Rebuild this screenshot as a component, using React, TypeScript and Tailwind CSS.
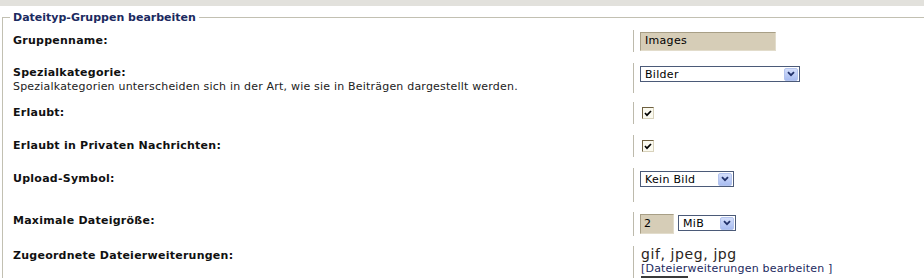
const ROWS = [
  { label: 'Gruppenname:', h: 'h-[22px]', mt: 'mt-0', pt: 'pt-[4px]', rt: 'pt-[2px]', kind: 'text' },
  { label: 'Spezialkategorie:', h: 'h-[30px]', mt: 'mt-[11px]', pt: 'pt-[3px]', rt: 'pt-[3px]', kind: 'cat' },
  { label: 'Erlaubt:', h: 'h-[22px]', mt: 'mt-[9px]', pt: 'pt-[4px]', rt: 'pt-[5px]', kind: 'check' },
  { label: 'Erlaubt in Privaten Nachrichten:', h: 'h-[22px]', mt: 'mt-[11px]', pt: 'pt-[4px]', rt: 'pt-[5px]', kind: 'check' },
  { label: 'Upload-Symbol:', h: 'h-[34px]', mt: 'mt-[11px]', pt: 'pt-[4px]', rt: 'pt-[3px]', kind: 'symbol' },
  { label: 'Maximale Dateigröße:', h: 'h-[24px]', mt: 'mt-[10px]', pt: 'pt-[2px]', rt: 'pt-[2px]', kind: 'size' },
  { label: 'Zugeordnete Dateierweiterungen:', h: 'h-[40px]', mt: 'mt-[10px]', pt: 'pt-[3px]', rt: 'pt-[1px]', kind: 'ext' },
];

function Arrow() {
  return (
    <span className="flex h-[13px] w-[14px] items-center justify-center rounded-[2px] border border-[#b4c4ee] bg-gradient-to-b from-[#d4defa] to-[#a9bdf1]">
      <svg width="8" height="6" viewBox="0 0 8 6">
        <path d="M1 1.2 L4 4.2 L7 1.2" stroke="#22326a" strokeWidth="1.8" fill="none" />
      </svg>
    </span>
  );
}

function Select({ value, w }: { value: string; w: string }) {
  return (
    <div className={`flex h-[16px] ${w} items-center justify-between border border-[#4b5a78] bg-white pl-[4px] pr-[1px] text-[11px] leading-none tracking-[0.3px] text-black`}>
      <span>{value}</span>
      <Arrow />
    </div>
  );
}

function Check() {
  return (
    <div className="ml-[2px] flex h-[12px] w-[12px] items-center justify-center border border-[#6e6040] border-b-[#d8d2bc] border-r-[#d8d2bc] bg-[#fbfaf0]">
      <svg width="8" height="7" viewBox="0 0 8 7">
        <path d="M1 3 L3 5.2 L7 1" stroke="#000" strokeWidth="1.7" fill="none" />
      </svg>
    </div>
  );
}

function Field({ kind }: { kind: string }) {
  if (kind === 'text')
    return (
      <div className="flex h-[19px] w-[136px] items-center border border-[#a89f86] border-b-[#e2dccb] border-r-[#e2dccb] bg-[#d6cdb7] pl-[4px] text-[11px] tracking-[0.3px] text-black">
        Images
      </div>
    );
  if (kind === 'cat') return <Select value="Bilder" w="w-[160px]" />;
  if (kind === 'check') return <Check />;
  if (kind === 'symbol') return <Select value="Kein Bild" w="w-[94px]" />;
  if (kind === 'size')
    return (
      <div className="flex items-start gap-[4px]">
        <div className="flex h-[20px] w-[34px] items-center border border-[#a89f86] border-b-[#e2dccb] border-r-[#e2dccb] bg-[#d6cdb7] pl-[3px] text-[11px] text-black">
          2
        </div>
        <div className="pt-[1px]">
          <Select value="MiB" w="w-[58px]" />
        </div>
      </div>
    );
  return (
    <div className="pl-[1px]">
      <div className="text-[14px] leading-[15px] tracking-[0.6px] text-[#2a241c]">gif, jpeg, jpg</div>
      <div className="text-[11px] leading-[13px] tracking-[0.2px] text-[#1c2a5e]">[Dateierweiterungen bearbeiten ]</div>
      <div className="mt-[1px] h-[2px] w-[47px] bg-[#3a3a3a]" />
    </div>
  );
}

export default function App() {
  return (
    <div className="h-[278px] w-[924px] overflow-hidden bg-white font-['DejaVu_Sans',Verdana,sans-serif]">
      <div className="h-[6px] bg-[#e2e1dc]" />
      <div className="relative ml-[2px] mt-[11px] border-l border-t border-[#c2c0b2] pt-[12px]">
        {/* legend sits on the fieldset line */}
        <div className="absolute -top-[8px] left-[7px] bg-white px-[3px] text-[11px] font-bold leading-[15px] text-[#1b2a60]">
          Dateityp-Gruppen bearbeiten
        </div>
        <div className="flex flex-col">
          {ROWS.map((row, i) => (
            <div key={i} className={`flex ${row.h} ${row.mt}`}>
              <div className={`w-[630px] shrink-0 pl-[10px] ${row.pt} text-[11px] leading-[14px] text-[#111]`}>
                <div className="font-bold tracking-[0.25px]">{row.label}</div>
                {row.kind === 'cat' && (
                  <div className="tracking-[0.2px] text-[#222]">
                    Spezialkategorien unterscheiden sich in der Art, wie sie in Beiträgen dargestellt werden.
                  </div>
                )}
              </div>
              <div className={`border-l border-[#bdbaac] pl-[6px] ${row.rt}`}>
                <Field kind={row.kind} />
              </div>
            </div>
          ))}
        </div>
      </div>
    </div>
  );
}
